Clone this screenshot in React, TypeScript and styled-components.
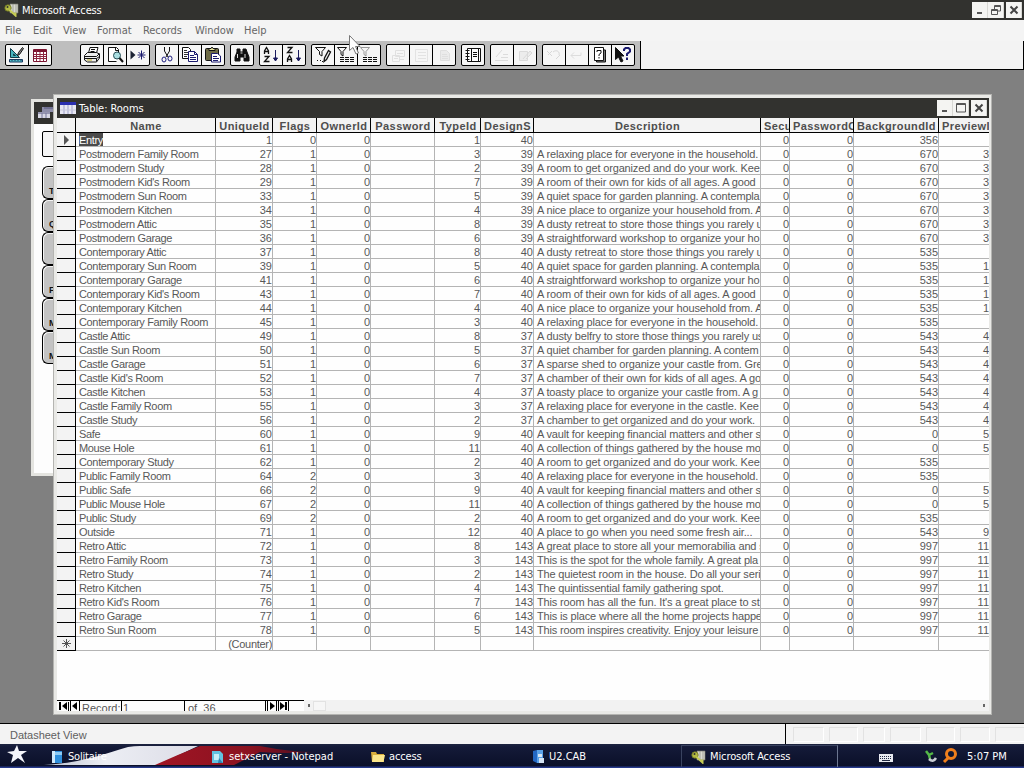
import React from "react";
import styled, { createGlobalStyle } from "styled-components";

const GlobalStyle = createGlobalStyle`
  * {
    box-sizing: border-box;
  }
  body {
    margin: 0;
    overflow: hidden;
    background: #808080;
  }
`;

const uiFont = `"DejaVu Sans Condensed", "DejaVu Sans", sans-serif`;
const gridFont = `"Liberation Sans", Arial, sans-serif`;

const Screen = styled.div`
  position: relative;
  display: flex;
  flex-direction: column;
  width: 1024px;
  height: 768px;
  overflow: hidden;
  font-family: ${uiFont};
  font-size: 11px;
  cursor: default;
`;

const AppTitle = styled.div`
  display: flex;
  align-items: center;
  height: 20px;
  padding: 0 2px 0 4px;
  background: #32322f;
  color: #fff;
`;

const TitleText = styled.span<{ $spacing?: number }>`
  flex: 1;
  white-space: nowrap;
  letter-spacing: ${(p) => p.$spacing ?? -0.15}px;
`;

const WinButtons = styled.div`
  display: flex;
  gap: 2px;
`;

const WinButtonPair = styled.div`
  display: flex;
`;

const WinButton = styled.div`
  display: flex;
  align-items: center;
  justify-content: center;
  width: 16px;
  height: 16px;
  background: #f4f4f2;
  border-right: 1px solid #d8d8d4;
`;

const MenuBar = styled.div`
  display: flex;
  align-items: center;
  gap: 12px;
  height: 21px;
  padding-left: 5px;
  background: #f4f4f4;
  color: #666;
`;

const MenuItem = styled.span<{ $w: number }>`
  width: ${(p) => p.$w}px;
  white-space: nowrap;
  letter-spacing: -0.05px;
`;

const ToolStrip = styled.div`
  display: flex;
  height: 29px;
  background: #f3f3f3;
  border-bottom: 1px solid #000;
  border-right: 1px solid #000;
`;

const ToolBar = styled.div`
  display: flex;
  gap: 5px;
  width: 641px;
  padding: 3px 0 0 5px;
  background: #bebebe;
  border-right: 1px solid #000;
`;

const ToolGroup = styled.div<{ $after?: number }>`
  display: flex;
  height: 22px;
  margin-right: ${(p) => p.$after ?? 0}px;
  border: 1px solid #000;
  border-radius: 2px;
  background: #f6f6f6;
`;

const ToolButton = styled.div`
  width: 23px;
  height: 20px;
  padding: 1px;
  border-right: 1px solid #000;
  &:last-child {
    width: 22px;
    border-right: none;
  }
  svg {
    display: block;
  }
`;

const Desktop = styled.div`
  position: relative;
  flex: 1;
  background: #808080;
`;

const BackWindow = styled.div`
  position: absolute;
  left: 31px;
  top: 29px;
  width: 60px;
  height: 377px;
  border: 3px solid #e4e4e0;
  background: #fdfdfd;
`;

const BackTitle = styled.div`
  height: 22px;
  padding: 2px 2px;
  background: #32322f;
`;

const BackBox = styled.div`
  width: 40px;
  height: 26px;
  margin: 7px 0 9px 8px;
  border: 1px solid #000;
  border-radius: 2px;
  background: #f5f5f5;
`;

const SideTab = styled.div`
  width: 40px;
  height: 33px;
  margin-left: 8px;
  padding: 19px 0 0 6px;
  border: 1px solid #000;
  border-width: 1px 0 1px 1px;
  border-radius: 6px 0 0 6px;
  background: #c3c3c3;
  box-shadow: inset 1px 1px 0 #f4f4f4;
  font: bold 9px ${gridFont};
  color: #111;
`;

const TableWindow = styled.div`
  position: absolute;
  left: 53px;
  top: 24px;
  display: flex;
  flex-direction: column;
  width: 939px;
  height: 621px;
  border: 4px solid #e9e9e6;
  border-right-width: 3px;
  outline: 1px solid #b4b4b1;
  outline-offset: -1px;
  background: #fefefe;
`;

const TableTitle = styled.div`
  display: flex;
  align-items: center;
  gap: 3px;
  height: 20px;
  padding: 0 2px 0 3px;
  background: #32322f;
  color: #fff;
`;

const columns =
  "19px 140px 57px 44px 54px 64px 46px 53px 227px 29px 64px 85px 50px";

const HeaderRow = styled.div`
  display: grid;
  grid-template-columns: ${columns};
  height: 15px;
  background: #f3f3f3;
  border-bottom: 1px solid #000;
`;

const HeaderCell = styled.div<{ $left?: boolean }>`
  height: 14px;
  padding-left: ${(p) => (p.$left ? 3 : 1)}px;
  border-right: 1px solid #000;
  overflow: hidden;
  font: bold 11px/16px ${gridFont};
  letter-spacing: 0.42px;
  color: #4e4e4e;
  text-align: ${(p) => (p.$left ? "left" : "center")};
  white-space: nowrap;
  &:last-child {
    border-right: none;
  }
`;

const Row = styled.div`
  display: grid;
  grid-template-columns: ${columns};
  height: 14px;
`;

const Selector = styled.div`
  display: flex;
  align-items: center;
  justify-content: center;
  background: #f3f3f3;
  border-right: 1px solid #000;
  border-bottom: 1px solid #000;
`;

const Cell = styled.div<{ $num?: boolean; $spacing?: number }>`
  height: 14px;
  padding: 0 ${(p) => (p.$num ? 0 : 1)}px 0 3px;
  border-right: 1px solid #b4b4b4;
  border-bottom: 1px solid #b4b4b4;
  overflow: hidden;
  font: 11px/15px ${gridFont};
  letter-spacing: ${(p) => p.$spacing ?? 0}px;
  color: #585858;
  text-align: ${(p) => (p.$num ? "right" : "left")};
  white-space: nowrap;
  &:last-child {
    border-right: none;
  }
`;

const Selected = styled.span`
  display: inline-block;
  height: 13px;
  background: #4b4b4b;
  color: #fff;
`;

const RecordBar = styled.div`
  display: flex;
  height: 11px;
  margin-top: auto;
  overflow: hidden;
  background: #f2f2f2;
`;

const Navigator = styled.div`
  display: flex;
  width: 247px;
  border-top: 1px solid #000;
  background: #fdfdfd;
`;

const NavPart = styled.div<{ $w: number; $pad?: number }>`
  width: ${(p) => p.$w}px;
  height: 10px;
  padding-left: ${(p) => p.$pad ?? 0}px;
  border-right: 1px solid #000;
  overflow: hidden;
  font: 11px/15px ${gridFont};
  color: #555;
  white-space: pre;
  svg {
    display: block;
  }
`;

const ScrollTrack = styled.div`
  display: flex;
  align-items: center;
  flex: 1;
  justify-content: space-between;
  padding: 0 4px 0 4px;
`;

const ScrollLeft = styled.div`
  display: flex;
  align-items: center;
  gap: 3px;
`;

const Thumb = styled.div`
  width: 13px;
  height: 10px;
  border: 1px solid #e2e2e2;
  background: #f6f6f6;
`;

const Dot = styled.div`
  width: 2px;
  height: 3px;
  background: #666;
`;

const StatusBar = styled.div`
  display: flex;
  height: 21px;
  border-top: 1px solid #000;
  background: #f3f3f3;
`;

const StatusText = styled.div`
  flex: none;
  width: 786px;
  padding-left: 10px;
  border-right: 1px solid #000;
  font: 11px/23px ${gridFont};
  letter-spacing: -0.02px;
  color: #606060;
`;

const StatusCells = styled.div`
  display: flex;
  gap: 5px;
  padding: 3px 0 0 7px;
`;

const StatusCell = styled.div<{ $w: number }>`
  flex: none;
  width: ${(p) => p.$w}px;
  height: 15px;
  border: 1px solid #e2e2e2;
  border-right-color: #fff;
  border-bottom-color: #fff;
`;

const TaskBar = styled.div`
  position: relative;
  display: flex;
  align-items: center;
  height: 24px;
  background: linear-gradient(#1d2440 0, #141a38 3px, #0b1029 22px, #26398a 23px);
  color: #fff;
`;

const FlagArt = styled.svg`
  position: absolute;
  left: 0;
  top: 0;
`;

const StartArea = styled.div`
  position: relative;
  width: 41px;
  height: 24px;
`;

const TaskItem = styled.div<{ $active?: boolean; $w?: number }>`
  position: relative;
  display: flex;
  align-items: center;
  gap: 4px;
  width: ${(p) => p.$w ?? 160}px;
  height: 22px;
  padding: 0 0 0 9px;
  border-top: 1px solid ${(p) => (p.$active ? "#39425f" : "transparent")};
  border-right: 1px solid ${(p) => (p.$active ? "#6c7690" : "transparent")};
  border-left: 1px solid ${(p) => (p.$active ? "#39425f" : "transparent")};
  white-space: nowrap;
  svg {
    flex: none;
  }
`;

const TaskText = styled.span<{ $spacing?: number }>`
  letter-spacing: ${(p) => p.$spacing ?? 0}px;
`;

const Tray = styled.div`
  display: flex;
  align-items: center;
  flex: 1;
  height: 22px;
  padding-left: 41px;
`;

const Gap = styled.div<{ $w: number }>`
  width: ${(p) => p.$w}px;
`;

const Pointer = styled.svg`
  position: absolute;
  left: 348px;
  top: 34px;
`;

function ToolIcon({ name }: { name: string }) {
  return (
    <svg width="20" height="18" viewBox="0 0 20 18" fill="none" stroke="#111">
      {toolIcons[name]}
    </svg>
  );
}

const funnel = <path d="M1.5 1.5h9l-3.5 4v4.500l-2-1.500v-3z" />;
const listLines = (
  <path d="M4 11.500h4m1 0h4m1 0h4M4 13.500h4m1 0h4m1 0h4M4 15.500h4m1 0h4m1 0h4" />
);

const toolIcons: Record<string, React.ReactNode> = {
  design: (
    <>
      <path d="M3.500 2.500v9h9z" fill="#45b4bd" stroke="#103a48" />
      <path d="M6.500 8v1.500h2z" fill="#fff" stroke="#103a48" />
      <path d="M2.500 13.500h13v2.500h-13z" fill="#56c3cc" stroke="#17395f" />
      <path d="M5 13v2M8 13v2M11 13v2M14 13v2" stroke="#17395f" />
      <path d="M15.500 1.500l1 1-4 6-2 1 1-3z" fill="#888" />
    </>
  ),
  sheet: (
    <>
      <path d="M3.500 3.500h13v12h-13z" fill="#fff" stroke="#7b1430" />
      <path d="M4 5h12" stroke="#7b1430" strokeWidth="2" />
      <path d="M6.500 4v11M10 6v9M13.500 6v9M4 8.500h12M4 10.500h12M4 12.500h12" stroke="#8e2640" />
    </>
  ),
  print: (
    <>
      <path d="M6.500 7l1.500-5.500h8L14.500 7z" fill="#fff" />
      <path d="M9 3.500h4M8.500 5.500h4" />
      <path d="M2.500 9.500l3-3h9l3 1.500v4l-3 4h-9l-3-2z" fill="#eee" />
      <path d="M2.500 10.500h12l3-3M3 12.500h11.500v3M14.500 12.500l3-2" />
      <path d="M5 14h5" stroke="#b9a91e" />
    </>
  ),
  preview: (
    <>
      <path d="M13.500 7V3.500l-2-2h-8v14h8" fill="#fff" />
      <path d="M10.500 1.500v3h3" />
      <circle cx="12" cy="9.500" r="3.500" fill="#a9dde0" stroke="#244d55" />
      <path d="M14.500 12l3.500 4" strokeWidth="2" />
    </>
  ),
  newRecord: (
    <>
      <path d="M2.500 4.500v9l5-4.500z" fill="#1c2333" stroke="none" />
      <path d="M13.500 4.500v9M9.500 9h8M10.500 6l6 6M16.500 6l-6 6" stroke="#1b1b6e" />
    </>
  ),
  cut: (
    <>
      <path d="M7.500 1v4l3.500 6M12.500 1v4l-3.500 6" />
      <ellipse cx="7" cy="13.500" rx="2" ry="2.500" stroke="#1b1b7e" />
      <ellipse cx="13" cy="12.500" rx="2" ry="2.500" stroke="#1b1b7e" />
    </>
  ),
  copy: (
    <>
      <path d="M2.500 1.500h6l2 2v9h-8z" fill="#fff" />
      <path d="M4 4.500h3M4 6.500h5M4 8.500h5M4 10.500h3" stroke="#333" />
      <path d="M8.500 5.500h6l3 3v7h-9z" fill="#fff" stroke="#1b1b6e" />
      <path d="M14.500 5.500v3h3M10 9.500h4M10 11.500h6M10 13.500h6" stroke="#1b1b6e" />
    </>
  ),
  paste: (
    <>
      <rect x="2.500" y="2.500" width="13" height="12" rx="1" fill="#6d6a45" />
      <path d="M6 4.500v-2h2l1-1.500 1 1.500h2v2z" fill="#e8e6a0" />
      <path d="M8.500 7.500h6l3 2.500v6h-9z" fill="#fff" stroke="#1b1b6e" />
      <path d="M10 10.500h4M10 12.500h6M10 14.500h5" stroke="#1b1b6e" />
    </>
  ),
  find: (
    <>
      <path d="M5 3h3v3h3V3h3l1 3 2 5v4h-5v-4h-4v4H3v-4l2-5z" fill="#111" />
      <path d="M5.500 8v4M13 8v4M8.500 7h2" stroke="#ddd" />
    </>
  ),
  sortAsc: (
    <>
      <path d="M3.500 8V5l2-3.500L7.500 5v3M4 5.500h3.500M3.500 10.500h4.500l-4.500 5h5" strokeWidth="1.300" />
      <path d="M14.500 4v11M12.500 12l2 3 2-3z" stroke="#1b1b5e" fill="#1b1b5e" />
    </>
  ),
  sortDesc: (
    <>
      <path d="M3.500 1.500h4.500l-4.500 5h5M3.500 16v-3l2-3.500 2 3.500v3M4 13.500h3.500" strokeWidth="1.300" />
      <path d="M14.500 4v11M12.500 12l2 3 2-3z" stroke="#1b1b5e" fill="#1b1b5e" />
    </>
  ),
  editFilter: (
    <>
      <path d="M2.500 1.500h10l-3.500 4v4.500l-2.500-1.500v-3z" />
      <path d="M15.500 4.500l2 1.500-4 7.500-2.500 2 .5-3.500z" fill="#eee" strokeWidth="1.300" />
      <path d="M4 14.500h1m2 0h1m1 1h1" />
    </>
  ),
  applyFilter: (
    <>
      {funnel}
      {listLines}
    </>
  ),
  showAll: (
    <>
      <g stroke="#999">{funnel}</g>
      {listLines}
    </>
  ),
  fadedForm: (
    <path d="M7.500 4.500h9v6h-9zM4.500 9.500h7v6h-7zM12 13.500h4M6 12.500h4M9 7.500h6" stroke="#e0e0e0" />
  ),
  fadedList: (
    <path d="M4.500 3.500h12v12h-12zM7 6.500h8M7 9.500h8M7 12.500h8" stroke="#e3e3e3" />
  ),
  fadedGroup: (
    <path d="M6.500 4.500h6l3 3v7h-9zM8 8.500h5M8 10.500h6M8 12.500h6" stroke="#dfdfdf" fill="#ebebeb" />
  ),
  notebook: (
    <>
      <path d="M4.500 2.500h13v13h-13z" fill="#fff" />
      <path d="M8.500 2v14M15.500 3v12M2.500 4.500h4M2.500 7.500h4M2.500 10.500h4M2.500 13.500h4" />
      <path d="M10 6.500h4M10 8.500h4M10 10.500h4" />
    </>
  ),
  fadedRun: (
    <path d="M3 14.500h13M9 11.500h7M11 8.500h5M4 11l6-7" stroke="#dcdcdc" />
  ),
  fadedTool: (
    <path d="M4.500 5.500h8v9h-8zM8 13l7-8 2 2-6 6" stroke="#dadada" fill="#ececec" />
  ),
  fadedUndo: (
    <path d="M3 5l5 5M8 5L4 9M9 6c4-3 7 0 6 3M12 13l4-4" stroke="#d8d8d8" />
  ),
  fadedBack: <path d="M4 9.500h10v-3M4 9.500l3-3M4 9.500l3 3" stroke="#dddddd" />,
  help: (
    <>
      <path d="M6.500 3.500v12.500h9v-12z" fill="#777" />
      <path d="M4.500 1.500h9v13h-9z" fill="#fff" />
      <path d="M7 6V4.500h4V7L9 8.500V10M9 11v1.500" />
    </>
  ),
  pointer: (
    <>
      <path d="M2.500 1.500v12l3-2.500 2.500 5 2-1-2.500-5h3.500z" fill="#111" />
      <path d="M11 5V3.500L12.500 2h3L17 3.500v2L14 8v2M14 11.500V14" stroke="#1b1b6e" strokeWidth="2" />
    </>
  ),
};

function AccessIcon() {
  return (
    <svg width="15" height="14" viewBox="0 0 15 14">
      <path d="M6 1h8v9H6z" fill="#d9d9cf" stroke="#77776c" strokeWidth=".7" />
      <path d="M9 1v9M12 1v9" stroke="#8b8b82" strokeWidth=".7" />
      <circle cx="4" cy="5" r="3.200" fill="#b4bc43" stroke="#6b7020" strokeWidth=".8" />
      <path d="M5.500 7l6 5.500v-3" stroke="#c6cc55" strokeWidth="2" fill="none" />
      <circle cx="3.500" cy="4" r="1" fill="#32322f" />
    </svg>
  );
}

function MinGlyph() {
  return (
    <svg width="10" height="10">
      <path d="M2 8h5" stroke="#555" strokeWidth="2" />
    </svg>
  );
}

function CloseGlyph() {
  return (
    <svg width="10" height="10">
      <path d="M1.500 1.500l7 7M8.500 1.500l-7 7" stroke="#444" strokeWidth="2" />
    </svg>
  );
}

const menus: [string, number][] = [
  ["File", 16],
  ["Edit", 18],
  ["View", 22],
  ["Format", 34],
  ["Records", 40],
  ["Window", 37],
  ["Help", 24],
];

const toolGroups = [
  ["design", "sheet"],
  ["print", "preview", "newRecord"],
  ["cut", "copy", "paste"],
  ["find"],
  ["sortAsc", "sortDesc"],
  ["editFilter", "applyFilter", "showAll"],
  ["fadedForm", "fadedList", "fadedGroup"],
  ["notebook"],
  ["fadedRun", "fadedTool"],
  ["fadedUndo", "fadedBack", "help", "pointer"],
];

const headers = [
  "Name",
  "UniqueId",
  "Flags",
  "OwnerId",
  "Password",
  "TypeId",
  "DesignS",
  "Description",
  "Secu",
  "PasswordC",
  "BackgroundId",
  "PreviewI",
];
const clippedHeaders = ["Secu", "PasswordC", "PreviewI"];

// name, id, flags, type, design, description, background, preview
type Room = [string, number, number, number, number, string, number, string];

const rooms: Room[] = [
  ["Entry", 1, 0, 1, 40, "", 356, ""],
  ["Postmodern Family Room", 27, 1, 3, 39, "A relaxing place for everyone in the household.", 670, "3"],
  ["Postmodern Study", 28, 1, 2, 39, "A room to get organized and do your work. Kee", 670, "3"],
  ["Postmodern Kid's Room", 29, 1, 7, 39, "A room of their own for kids of all ages. A good", 670, "3"],
  ["Postmodern Sun Room", 33, 1, 5, 39, "A quiet space for garden planning. A contempla", 670, "3"],
  ["Postmodern Kitchen", 34, 1, 4, 39, "A nice place to organize your household from. A", 670, "3"],
  ["Postmodern Attic", 35, 1, 8, 39, "A dusty retreat to store those things you rarely u", 670, "3"],
  ["Postmodern Garage", 36, 1, 6, 39, "A straightforward workshop to organize your ho", 670, "3"],
  ["Contemporary Attic", 37, 1, 8, 40, "A dusty retreat to store those things you rarely u", 535, ""],
  ["Contemporary Sun Room", 39, 1, 5, 40, "A quiet space for garden planning. A contempla", 535, "1"],
  ["Contemporary Garage", 41, 1, 6, 40, "A straightforward workshop to organize your ho", 535, "1"],
  ["Contemporary Kid's Room", 43, 1, 7, 40, "A room of their own for kids of all ages. A good", 535, "1"],
  ["Contemporary Kitchen", 44, 1, 4, 40, "A nice place to organize your household from. A", 535, "1"],
  ["Contemporary Family Room", 45, 1, 3, 40, "A relaxing place for everyone in the household.", 535, ""],
  ["Castle Attic", 49, 1, 8, 37, "A dusty belfry to store those things you rarely us", 543, "4"],
  ["Castle Sun Room", 50, 1, 5, 37, "A quiet chamber for garden planning. A contem", 543, "4"],
  ["Castle Garage", 51, 1, 6, 37, "A sparse shed to organize your castle from. Gre", 543, "4"],
  ["Castle Kid's Room", 52, 1, 7, 37, "A chamber of their own for kids of all ages. A go", 543, "4"],
  ["Castle Kitchen", 53, 1, 4, 37, "A toasty place to organize your castle from. A g", 543, "4"],
  ["Castle Family Room", 55, 1, 3, 37, "A relaxing place for everyone in the castle. Kee", 543, "4"],
  ["Castle Study", 56, 1, 2, 37, "A chamber to get organized and do your work.", 543, "4"],
  ["Safe", 60, 1, 9, 40, "A vault for keeping financial matters and other s", 0, "5"],
  ["Mouse Hole", 61, 1, 11, 40, "A collection of things gathered by the house mo", 0, "5"],
  ["Contemporary Study", 62, 1, 2, 40, "A room to get organized and do your work. Kee", 535, ""],
  ["Public Family Room", 64, 2, 3, 40, "A relaxing place for everyone in the household.", 535, ""],
  ["Public Safe", 66, 2, 9, 40, "A vault for keeping financial matters and other s", 0, "5"],
  ["Public Mouse Hole", 67, 2, 11, 40, "A collection of things gathered by the house mo", 0, "5"],
  ["Public Study", 69, 2, 2, 40, "A room to get organized and do your work. Kee", 535, ""],
  ["Outside", 71, 1, 12, 40, "A place to go when you need some fresh air...", 543, "9"],
  ["Retro Attic", 72, 1, 8, 143, "A great place to store all your memorabilia and s", 997, "11"],
  ["Retro Family Room", 73, 1, 3, 143, "This is the spot for the whole family. A great pla", 997, "11"],
  ["Retro Study", 74, 1, 2, 143, "The quietest room in the house. Do all your seri", 997, "11"],
  ["Retro Kitchen", 75, 1, 4, 143, "The quintissential family gathering spot.", 997, "11"],
  ["Retro Kid's Room", 76, 1, 7, 143, "This room has all the fun. It's a great place to st", 997, "11"],
  ["Retro Garage", 77, 1, 6, 143, "This is place where all the home projects happe", 997, "11"],
  ["Retro Sun Room", 78, 1, 5, 143, "This room inspires creativity. Enjoy your leisure .", 997, "11"],
];

function RoomRow({ room, current }: { room: Room; current: boolean }) {
  const [name, id, flags, type, design, description, background, preview] = room;
  return (
    <Row>
      <Selector>
        {current && (
          <svg width="8" height="10">
            <path d="M2 0v10l5-5z" fill="#555" />
          </svg>
        )}
      </Selector>
      <Cell $spacing={-0.35}>{current ? <Selected>{name}</Selected> : name}</Cell>
      <Cell $num>{id}</Cell>
      <Cell $num>{flags}</Cell>
      <Cell $num>0</Cell>
      <Cell />
      <Cell $num>{type}</Cell>
      <Cell $num>{design}</Cell>
      <Cell $spacing={-0.16}>{description}</Cell>
      <Cell $num>0</Cell>
      <Cell $num>0</Cell>
      <Cell $num>{background}</Cell>
      <Cell $num>{preview}</Cell>
    </Row>
  );
}

function RoomsTable() {
  return (
    <TableWindow>
      <TableTitle>
        <svg width="16" height="14">
          <path d="M0 1h16v12H0z" fill="#e8e8f4" />
          <path d="M0 1h16v3H0z" fill="#2a2fb0" />
          <path d="M4 4v9M8 4v9M12 4v9" stroke="#9da0c8" />
          <path d="M0 9h16" stroke="#c8c8dc" />
        </svg>
        <TitleText $spacing={-0.05}>Table: Rooms</TitleText>
        <WinButtons>
          <WinButtonPair>
            <WinButton>
              <MinGlyph />
            </WinButton>
            <WinButton>
              <svg width="10" height="10">
                <path d="M.5.500h9v8.500h-9zM0 1.500h10" stroke="#555" fill="none" />
              </svg>
            </WinButton>
          </WinButtonPair>
          <WinButton>
            <CloseGlyph />
          </WinButton>
        </WinButtons>
      </TableTitle>
      <HeaderRow>
        <HeaderCell />
        {headers.map((h) => (
          <HeaderCell key={h} $left={clippedHeaders.includes(h)}>
            {h}
          </HeaderCell>
        ))}
      </HeaderRow>
      {rooms.map((room, i) => (
        <RoomRow key={room[1]} room={room} current={i === 0} />
      ))}
      <Row>
        <Selector>
          <svg width="9" height="9" stroke="#555" fill="none">
            <path d="M4.500 0v9M0 4.500h9M1.500 1.500l6 6M7.500 1.500l-6 6" />
          </svg>
        </Selector>
        <Cell />
        <Cell $num $spacing={-0.3}>
          (Counter)
        </Cell>
        {headers.slice(2).map((h) => (
          <Cell key={h} />
        ))}
      </Row>
      <RecordBar>
        <Navigator>
          <NavPart $w={14}>
            <svg width="13" height="10">
              <path d="M2 1h2v8H2zM5 5l5-4v8zM11 1h1v9h-1z" fill="#000" />
            </svg>
          </NavPart>
          <NavPart $w={9}>
            <svg width="8" height="10">
              <path d="M1 5l5-4v8z" fill="#000" />
            </svg>
          </NavPart>
          <NavPart $w={42} $pad={2}>
            Record:
          </NavPart>
          <NavPart $w={63} $pad={1}>
            1
          </NavPart>
          <NavPart $w={81} $pad={3}>
            of  36
          </NavPart>
          <NavPart $w={11}>
            <svg width="10" height="10">
              <path d="M1 0h1v10H1zM4 1l5 4-5 4z" fill="#000" />
            </svg>
          </NavPart>
          <NavPart $w={12}>
            <svg width="11" height="10">
              <path d="M1 0h1v10H1zM3 1l5 4-5 4zM8 1h2v8H8z" fill="#000" />
            </svg>
          </NavPart>
        </Navigator>
        <ScrollTrack>
          <ScrollLeft>
            <Dot />
            <Thumb />
          </ScrollLeft>
          <Dot />
        </ScrollTrack>
      </RecordBar>
    </TableWindow>
  );
}

function App() {
  return (
    <>
      <GlobalStyle />
      <Screen>
        <AppTitle>
          <AccessIcon />
          <Gap $w={3} />
          <TitleText>Microsoft Access</TitleText>
          <WinButtons>
            <WinButtonPair>
              <WinButton>
                <MinGlyph />
              </WinButton>
              <WinButton>
                <svg width="10" height="10" fill="none" stroke="#555">
                  <path d="M3.500 4V.500h6v5.500H7M3 1.500h7M.5 4.500h6v5h-6zM0 5.500h7" />
                </svg>
              </WinButton>
            </WinButtonPair>
            <WinButton>
              <CloseGlyph />
            </WinButton>
          </WinButtons>
        </AppTitle>
        <MenuBar>
          {menus.map(([label, w]) => (
            <MenuItem key={label} $w={w}>
              {label}
            </MenuItem>
          ))}
        </MenuBar>
        <ToolStrip>
          <ToolBar>
            {toolGroups.map((group, i) => (
              <ToolGroup key={i} $after={i === 0 ? 23 : 0}>
                {group.map((name) => (
                  <ToolButton key={name}>
                    <ToolIcon name={name} />
                  </ToolButton>
                ))}
              </ToolGroup>
            ))}
          </ToolBar>
        </ToolStrip>
        <Desktop>
          <BackWindow>
            <BackTitle>
              <svg width="18" height="16">
                <path d="M6 3h12v5H6z" fill="#8d8da8" />
                <path d="M2 8h12v6H2z" fill="#d8d8e4" />
                <path d="M2 9h12M8 4h10" stroke="#55557c" />
                <path d="M6 9v5M10 9v5" stroke="#77779a" />
              </svg>
            </BackTitle>
            <BackBox />
            {["T", "Q", "", "F", "M", "M"].map((t, i) => (
              <SideTab key={i}>{t}</SideTab>
            ))}
          </BackWindow>
          <RoomsTable />
        </Desktop>
        <StatusBar>
          <StatusText>Datasheet View</StatusText>
          <StatusCells>
            {[31, 29, 22, 31, 29, 30, 31].map((w, i) => (
              <StatusCell key={i} $w={w} />
            ))}
          </StatusCells>
        </StatusBar>
        <TaskBar>
          <FlagArt width="400" height="24">
            <defs>
              <linearGradient id="stripe" x1="0" x2="1">
                <stop offset="0" stopColor="#b9c0d0" />
                <stop offset=".4" stopColor="#eceef4" />
                <stop offset="1" stopColor="#dcdce6" />
              </linearGradient>
              <linearGradient id="red" x1="0" x2="1">
                <stop offset="0" stopColor="#a01524" />
                <stop offset=".6" stopColor="#8a1220" />
                <stop offset="1" stopColor="#4a0f20" />
              </linearGradient>
            </defs>
            <path d="M44 21C80 19 105 10 128 3q6-1 12-1h58l-40 19z" fill="url(#stripe)" />
            <path d="M155 21q22-10 45-19h60q30 6 55 6-30 2-55 0-12 6-26 13z" fill="url(#red)" />
          </FlagArt>
          <StartArea>
            <svg width="40" height="24">
              <path d="M17 1l2 6 8 0-6 4 4 8-7-5-7 5 2-8-6-3 7-1z" fill="#f5f6fb" />
            </svg>
          </StartArea>
          <TaskItem>
            <svg width="13" height="14">
              <path d="M1 1h10v12H1z" fill="#2e8fdc" />
              <path d="M1 1h3v12H1z" fill="#cfe9fb" />
              <path d="M4 2h7v3H4z" fill="#8ecbf4" />
            </svg>
            <TaskText $spacing={-0.2}>Solitaire</TaskText>
          </TaskItem>
          <TaskItem>
            <svg width="14" height="14">
              <path d="M1 1h8l3 3v9H1z" fill="#63c3e2" />
              <path d="M3 4h5v6H3z" fill="#c8eef8" />
              <path d="M8 8l4 5H7z" fill="#2f86b4" />
            </svg>
            <TaskText>setxserver - Notepad</TaskText>
          </TaskItem>
          <TaskItem $w={161}>
            <svg width="14" height="13">
              <path d="M0 2h5l1 2h7v8H1z" fill="#d9ae3c" />
              <path d="M2 5h12l-1.500 7H1z" fill="#fbe68b" />
            </svg>
            <TaskText $spacing={-0.15}>access</TaskText>
          </TaskItem>
          <TaskItem $w={159}>
            <svg width="13" height="14">
              <path d="M1 1l4-1v13l-4-2z" fill="#2468c4" />
              <path d="M5 0h6v13H5z" fill="#5ba2e8" />
              <path d="M6 4h4v3H6zM7 8h5v5H7z" fill="#d6e4f4" />
            </svg>
            <TaskText>U2.CAB</TaskText>
          </TaskItem>
          <TaskItem $active $w={157}>
            <AccessIcon />
            <TaskText $spacing={-0.1}>Microsoft Access</TaskText>
          </TaskItem>
          <Tray>
            <svg width="14" height="12">
              <path d="M0 4h14v8H0z" fill="#e8eaf0" />
              <path d="M1 6.500h12M1 8.500h12" stroke="#222a44" strokeDasharray="1 1" />
              <path d="M3 10.500h8" stroke="#222a44" />
            </svg>
            <Gap $w={31} />
            <svg width="14" height="15" fill="none">
              <path d="M2 2l3 4 4-2M5 6l1 4" stroke="#55b848" strokeWidth="2.500" />
              <path d="M5 10q4 4 7-1" stroke="#c9ccd4" strokeWidth="2.500" />
            </svg>
            <Gap $w={4} />
            <svg width="16" height="16" fill="none" stroke="#f07f1c">
              <circle cx="9" cy="6" r="4.500" strokeWidth="3" />
              <path d="M6 10l-4 4" strokeWidth="3" />
            </svg>
            <Gap $w={9} />
            <TaskText>5:07 PM</TaskText>
          </Tray>
        </TaskBar>
        <Pointer width="14" height="22">
          <path
            d="M1.500 1.500v15l3.500-3 3 6.500 2.500-1-3-6.500h4.500z"
            fill="#fff"
            stroke="#777"
          />
        </Pointer>
      </Screen>
    </>
  );
}

export default App;
